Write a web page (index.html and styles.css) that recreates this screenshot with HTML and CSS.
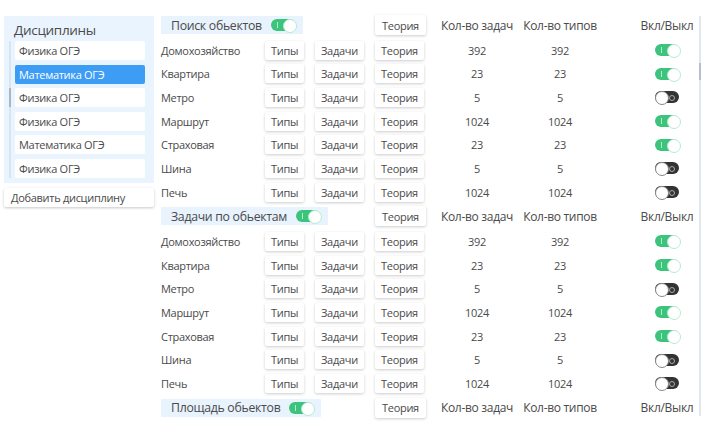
FILE: index.html
```html
<!DOCTYPE html>
<html lang="ru">
  <head>
    <meta charset="UTF-8" />
    <meta name="viewport" content="width=device-width, initial-scale=1.0" />
    <title>Дисциплины</title>
    <link rel="stylesheet" href="styles.css">
  </head>
  <body>
    <aside class="sidebar">
      <div class="disciplines">
        <h2>Дисциплины</h2>
        <div class="list-wrap">
          <div class="list-scroll"><span class="list-thumb"></span></div>
          <ul class="discipline-list">
            <li class="discipline">Физика ОГЭ</li>
            <li class="discipline active">Математика ОГЭ</li>
            <li class="discipline">Физика ОГЭ</li>
            <li class="discipline">Физика ОГЭ</li>
            <li class="discipline">Математика ОГЭ</li>
            <li class="discipline">Физика ОГЭ</li>
          </ul>
        </div>
      </div>
      <button class="add-btn">Добавить дисциплину</button>
    </aside>

    <main class="tasks">
      <!-- Поиск обьектов -->
      <div class="row head">
        <div class="section-title">Поиск обьектов <span class="switch on"></span></div>
        <button class="btn col-theory">Теория</button>
        <span class="col-count">Кол-во задач</span>
        <span class="col-types">Кол-во типов</span>
        <span class="col-switch">Вкл/Выкл</span>
      </div>
      <div class="row">
        <span class="label">Домохозяйство</span>
        <button class="btn">Типы</button><button class="btn">Задачи</button><button class="btn">Теория</button>
        <span class="col-count">392</span><span class="col-types">392</span>
        <span class="col-switch"><span class="switch on"></span></span>
      </div>
      <div class="row">
        <span class="label">Квартира</span>
        <button class="btn">Типы</button><button class="btn">Задачи</button><button class="btn">Теория</button>
        <span class="col-count">23</span><span class="col-types">23</span>
        <span class="col-switch"><span class="switch on"></span></span>
      </div>
      <div class="row">
        <span class="label">Метро</span>
        <button class="btn">Типы</button><button class="btn">Задачи</button><button class="btn">Теория</button>
        <span class="col-count">5</span><span class="col-types">5</span>
        <span class="col-switch"><span class="switch"></span></span>
      </div>
      <div class="row">
        <span class="label">Маршрут</span>
        <button class="btn">Типы</button><button class="btn">Задачи</button><button class="btn">Теория</button>
        <span class="col-count">1024</span><span class="col-types">1024</span>
        <span class="col-switch"><span class="switch on"></span></span>
      </div>
      <div class="row">
        <span class="label">Страховая</span>
        <button class="btn">Типы</button><button class="btn">Задачи</button><button class="btn">Теория</button>
        <span class="col-count">23</span><span class="col-types">23</span>
        <span class="col-switch"><span class="switch on"></span></span>
      </div>
      <div class="row">
        <span class="label">Шина</span>
        <button class="btn">Типы</button><button class="btn">Задачи</button><button class="btn">Теория</button>
        <span class="col-count">5</span><span class="col-types">5</span>
        <span class="col-switch"><span class="switch"></span></span>
      </div>
      <div class="row">
        <span class="label">Печь</span>
        <button class="btn">Типы</button><button class="btn">Задачи</button><button class="btn">Теория</button>
        <span class="col-count">1024</span><span class="col-types">1024</span>
        <span class="col-switch"><span class="switch"></span></span>
      </div>

      <!-- Задачи по обьектам -->
      <div class="row head">
        <div class="section-title">Задачи по обьектам <span class="switch on"></span></div>
        <button class="btn col-theory">Теория</button>
        <span class="col-count">Кол-во задач</span>
        <span class="col-types">Кол-во типов</span>
        <span class="col-switch">Вкл/Выкл</span>
      </div>
      <div class="row">
        <span class="label">Домохозяйство</span>
        <button class="btn">Типы</button><button class="btn">Задачи</button><button class="btn">Теория</button>
        <span class="col-count">392</span><span class="col-types">392</span>
        <span class="col-switch"><span class="switch on"></span></span>
      </div>
      <div class="row">
        <span class="label">Квартира</span>
        <button class="btn">Типы</button><button class="btn">Задачи</button><button class="btn">Теория</button>
        <span class="col-count">23</span><span class="col-types">23</span>
        <span class="col-switch"><span class="switch on"></span></span>
      </div>
      <div class="row">
        <span class="label">Метро</span>
        <button class="btn">Типы</button><button class="btn">Задачи</button><button class="btn">Теория</button>
        <span class="col-count">5</span><span class="col-types">5</span>
        <span class="col-switch"><span class="switch"></span></span>
      </div>
      <div class="row">
        <span class="label">Маршрут</span>
        <button class="btn">Типы</button><button class="btn">Задачи</button><button class="btn">Теория</button>
        <span class="col-count">1024</span><span class="col-types">1024</span>
        <span class="col-switch"><span class="switch on"></span></span>
      </div>
      <div class="row">
        <span class="label">Страховая</span>
        <button class="btn">Типы</button><button class="btn">Задачи</button><button class="btn">Теория</button>
        <span class="col-count">23</span><span class="col-types">23</span>
        <span class="col-switch"><span class="switch on"></span></span>
      </div>
      <div class="row">
        <span class="label">Шина</span>
        <button class="btn">Типы</button><button class="btn">Задачи</button><button class="btn">Теория</button>
        <span class="col-count">5</span><span class="col-types">5</span>
        <span class="col-switch"><span class="switch"></span></span>
      </div>
      <div class="row">
        <span class="label">Печь</span>
        <button class="btn">Типы</button><button class="btn">Задачи</button><button class="btn">Теория</button>
        <span class="col-count">1024</span><span class="col-types">1024</span>
        <span class="col-switch"><span class="switch"></span></span>
      </div>

      <!-- Площадь обьектов -->
      <div class="row head">
        <div class="section-title">Площадь обьектов <span class="switch on"></span></div>
        <button class="btn col-theory">Теория</button>
        <span class="col-count">Кол-во задач</span>
        <span class="col-types">Кол-во типов</span>
        <span class="col-switch">Вкл/Выкл</span>
      </div>
    </main>

    <div class="page-scroll"><span class="page-thumb"></span></div>
  </body>
</html>
```

FILE: styles.css
```css
* {
  margin: 0;
  padding: 0;
  box-sizing: border-box;
}

body {
  font-family: "Open Sans", "Noto Sans", sans-serif;
  font-size: 11px;
  letter-spacing: -0.3px;
  color: #4a4a4a;
  background: #fff;
  display: flex;
  align-items: flex-start;
  height: 100vh;
  overflow: hidden;
}

button {
  font-family: inherit;
  font-size: inherit;
  letter-spacing: inherit;
  color: inherit;
  border: none;
  background: #fff;
  cursor: pointer;
}

/* left column */

.sidebar {
  width: 150px;
  margin: 16px 0 0 4px;
  display: flex;
  flex-direction: column;
  gap: 5px;
}

.disciplines {
  background: #eaf4fe;
  padding: 4px 9px 5px 5px;
}

.disciplines h2 {
  font-size: 13.5px;
  font-weight: normal;
  height: 21px;
  line-height: 20px;
  padding-left: 5px;
}

.list-wrap {
  display: flex;
  gap: 4px;
}

.list-scroll {
  width: 2px;
  background: #d9e4ef;
  padding-top: 47px;
}

.list-thumb {
  display: block;
  height: 19px;
  background: #a9b6c4;
}

.discipline-list {
  flex: 1;
  list-style: none;
  display: flex;
  flex-direction: column;
  gap: 4.6px;
}

.discipline {
  height: 19px;
  line-height: 19px;
  padding-left: 4px;
  background: #fff;
  border-radius: 2px;
}

.discipline.active {
  background: #3d9cf4;
  color: #fff;
}

.add-btn {
  height: 19px;
  text-align: left;
  padding-left: 7px;
  border-radius: 2px;
  box-shadow: 0 1px 3px rgba(0, 0, 0, 0.22);
}

/* task table */

.tasks {
  margin: 15px 0 0 7px;
  width: 536px;
  display: flex;
  flex-direction: column;
  gap: 4.67px;
}

.row {
  display: grid;
  grid-template-columns: 104px 50px 60px 57px 90px 76px 39px 60px;
  align-items: center;
  height: 19px;
}

.row.head {
  height: 20px;
  margin-bottom: 1px;
  font-size: 12px;
}

.label {
  white-space: nowrap;
}

.btn {
  justify-self: start;
  height: 19px;
  padding: 0 6px;
  border-radius: 2px;
  box-shadow: 0 1px 3px rgba(0, 0, 0, 0.2);
}

.row.head .btn {
  height: 20px;
  font-size: 11px;
  padding: 0 7px;
}

.section-title {
  grid-column: 1 / 4;
  justify-self: start;
  display: flex;
  align-items: center;
  gap: 9px;
  height: 18px;
  padding: 0 8px 0 10px;
  background: #e8f3fd;
  font-size: 12.3px;
  white-space: nowrap;
}

.col-theory {
  grid-column: 4;
}

.col-count {
  grid-column: 5;
  text-align: center;
  white-space: nowrap;
}

.col-types {
  grid-column: 6;
  text-align: center;
  white-space: nowrap;
}

.col-switch {
  grid-column: 8;
  display: flex;
  justify-content: center;
  white-space: nowrap;
}

/* on/off switch */

.switch {
  position: relative;
  display: inline-block;
  width: 24px;
  height: 12px;
  border-radius: 6px;
  background: #333;
}

.switch::before {
  content: "";
  position: absolute;
  top: 0;
  left: 0;
  width: 12px;
  height: 12px;
  border-radius: 50%;
  background: #fff;
  border: 1px solid #888;
}

.switch::after {
  content: "";
  position: absolute;
  top: 4px;
  right: 4px;
  width: 4px;
  height: 4px;
  border-radius: 50%;
  border: 1px solid #aaa;
}

.switch.on {
  background: #3dc47c;
}

.switch.on::before {
  left: 12px;
  border-color: #b6ecd0;
}

.switch.on::after {
  left: 6px;
  right: auto;
  top: 3px;
  width: 1px;
  height: 6px;
  border: none;
  border-radius: 0;
  background: #b6ecd0;
}

/* page scrollbar */

.page-scroll {
  width: 2px;
  height: 400px;
  margin: 16px 0 0 2px;
  background: #dde8f3;
  padding-top: 47px;
}

.page-thumb {
  display: block;
  height: 17px;
  background: #b3c0cd;
}
```
